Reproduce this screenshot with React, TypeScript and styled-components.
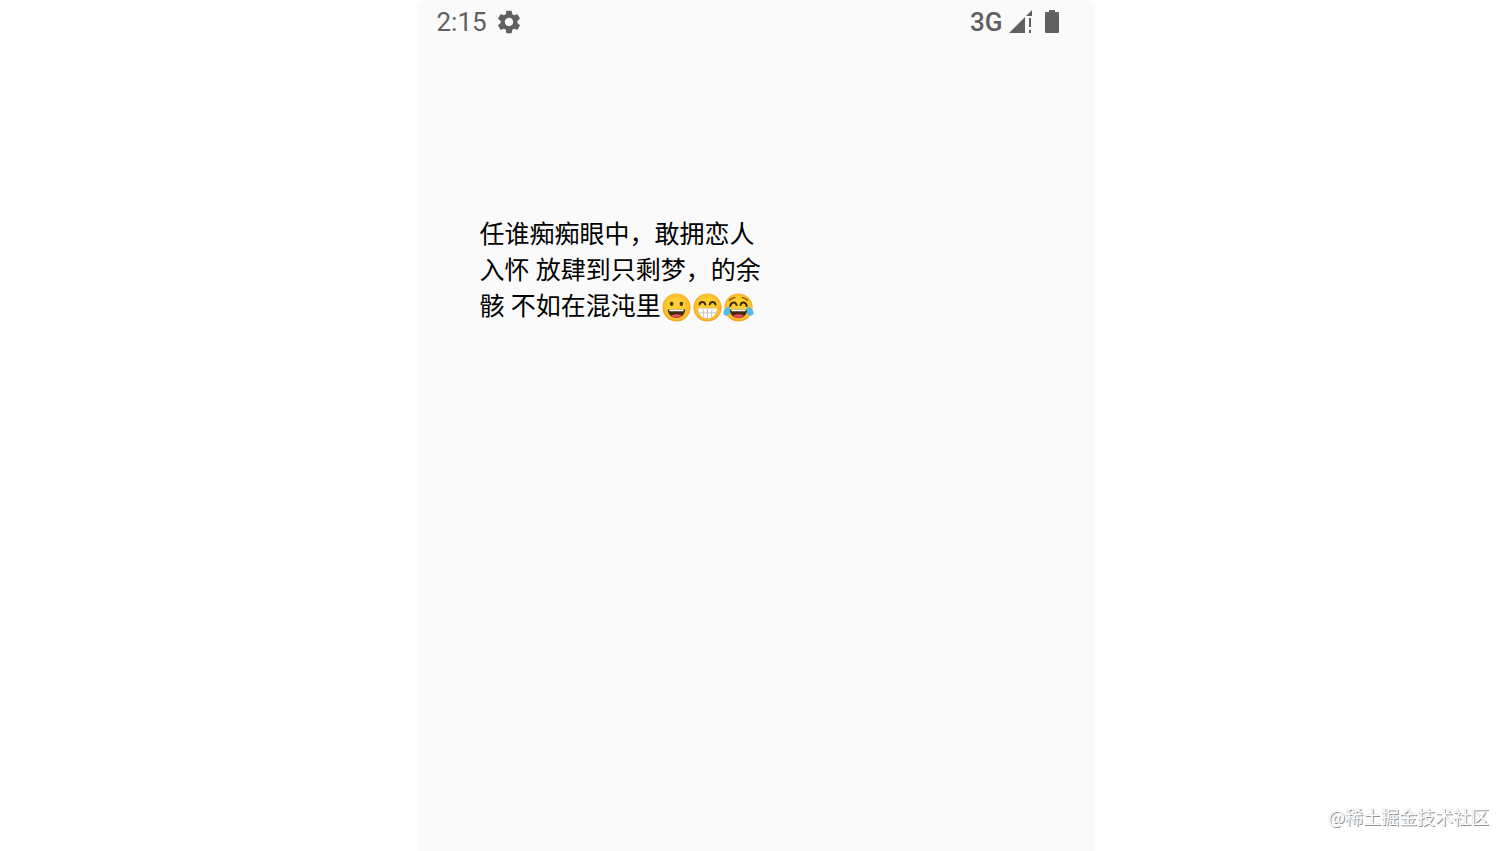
import React from "react";
import styled, { createGlobalStyle } from "styled-components";
import { MdSettings } from "react-icons/md";

const GlobalStyle = createGlobalStyle`
  * { box-sizing: border-box; }
  body { margin: 0; background: #ffffff; }
`;

const Page = styled.div`
  position: relative;
  display: flex;
  justify-content: center;
  min-height: 100vh;
`;

const Screen = styled.main`
  width: 100%;
  max-width: 677px;
  background: #fafafa;
  border-radius: 8px 8px 0 0;
`;

const StatusBar = styled.header`
  display: flex;
  align-items: center;
  justify-content: space-between;
  height: 44px;
  padding: 0 32px 0 19px;
  color: #606060;
  font-family: Roboto, "Liberation Sans", sans-serif;
  font-size: 26px;
  line-height: 44px;
`;

const StatusGroup = styled.div<{ $gap: number }>`
  display: flex;
  align-items: center;
  gap: ${(p) => p.$gap}px;
`;

const Network = styled.span`
  font-weight: 500;
`;

const StatusIcon = styled.svg`
  display: block;
`;

const Lyrics = styled.p`
  margin: 0;
  padding: 173px 0 0 62px;
  color: #000000;
  font-family: Roboto, "Noto Sans CJK SC", sans-serif;
  font-size: 25px;
  line-height: 36px;
`;

const Line = styled.span`
  display: flex;
  align-items: center;
  height: 36px;
  white-space: pre;
`;

const Emoji = styled.svg`
  display: block;
  flex: none;
  width: 31px;
  height: 31px;
`;

const Watermark = styled.div`
  position: absolute;
  right: 23px;
  bottom: 21px;
  color: #ffffff;
  font-family: "Noto Sans CJK SC", sans-serif;
  font-size: 18px;
  line-height: 28px;
  text-shadow: 0 0 1px #c0c0c0, 1px 1px 0 #8c8c8c;
`;

const Face = () => (
  <>
    <defs>
      <radialGradient id="face" cx="50%" cy="48%" r="52%">
        <stop offset="0.5" stopColor="#fdd030" />
        <stop offset="0.85" stopColor="#fbbf2a" />
        <stop offset="1" stopColor="#f09a20" />
      </radialGradient>
    </defs>
    <circle cx="64" cy="64" r="58" fill="url(#face)" />
  </>
);

const Grinning = () => (
  <Emoji viewBox="0 0 128 128" role="img" aria-label="😀">
    <Face />
    <ellipse cx="44" cy="49" rx="7" ry="9" fill="#422b0d" />
    <ellipse cx="84" cy="49" rx="7" ry="9" fill="#422b0d" />
    <path d="M28 72h72c0 20-16 35-36 35S28 92 28 72z" fill="#422b0d" />
    <path d="M34 72h60v3q0 4-4 4H38q-4 0-4-4z" fill="#ffffff" />
    <path d="M42 99c7-10 37-10 44 0-12 10-32 10-44 0z" fill="#e94b5b" />
  </Emoji>
);

const Beaming = () => (
  <Emoji viewBox="0 0 128 128" role="img" aria-label="😁">
    <Face />
    <path d="M31 52c3-14 21-14 24 0M73 52c3-14 21-14 24 0" fill="none" stroke="#422b0d" strokeWidth="8" strokeLinecap="round" />
    <path d="M24 70q0-4 5-4h70q5 0 5 4c0 22-18 40-40 40S24 92 24 70z" fill="#ffffff" stroke="#d99b2a" strokeWidth="2" />
    <path d="M26 86h76M45 68l4 38M64 67v42M83 68l-4 38" fill="none" stroke="#c4c4c4" strokeWidth="4" />
  </Emoji>
);

const Joy = () => (
  <Emoji viewBox="0 0 128 128" role="img" aria-label="😂">
    <Face />
    <path d="M27 34q10-11 22-11M101 34q-10-11-22-11" fill="none" stroke="#7a4c12" strokeWidth="5" strokeLinecap="round" />
    <path d="M30 58c4-19 22-19 26-4M98 58c-4-19-22-19-26-4" fill="none" stroke="#422b0d" strokeWidth="8" strokeLinecap="round" />
    <path d="M28 72h72c0 20-16 36-36 36S28 92 28 72z" fill="#422b0d" />
    <path d="M34 72h60v3q0 4-4 4H38q-4 0-4-4z" fill="#ffffff" />
    <path d="M42 99c7-10 37-10 44 0-12 11-32 11-44 0z" fill="#e94b5b" />
    <path d="M29 61C16 61 1 74 2 88c1 12 19 14 25 3 4-9 2-18 2-30z" fill="#4dbbec" />
    <path d="M99 61c13 0 28 13 27 27-1 12-19 14-25 3-4-9-2-18-2-30z" fill="#4dbbec" />
  </Emoji>
);

export default function App() {
  return (
    <Page>
      <GlobalStyle />
      <Screen>
        <StatusBar>
          <StatusGroup $gap={8}>
            <span>2:15</span>
            <MdSettings size={28} aria-label="设置" />
          </StatusGroup>
          <StatusGroup $gap={6}>
            <Network>3G</Network>
            <StatusIcon width="24" height="24" viewBox="0 0 24 24" fill="currentColor" aria-hidden="true">
              <path d="M0 23 16 7v16zM17 6l6-6v6h-6zM20 8h2v9h-2zM20 20h2v3h-2z" />
            </StatusIcon>
            <StatusIcon width="24" height="24" viewBox="0 0 24 24" fill="currentColor" aria-hidden="true">
              <path d="M10 0h6v2h3q1 0 1 1v19q0 1-1 1H7q-1 0-1-1V3q0-1 1-1h3z" />
            </StatusIcon>
          </StatusGroup>
        </StatusBar>
        <Lyrics>
          <Line>任谁痴痴眼中，敢拥恋人</Line>
          <Line>入怀 放肆到只剩梦，的余</Line>
          <Line>
            骸 不如在混沌里
            <Grinning />
            <Beaming />
            <Joy />
          </Line>
        </Lyrics>
      </Screen>
      <Watermark>@稀土掘金技术社区</Watermark>
    </Page>
  );
}
